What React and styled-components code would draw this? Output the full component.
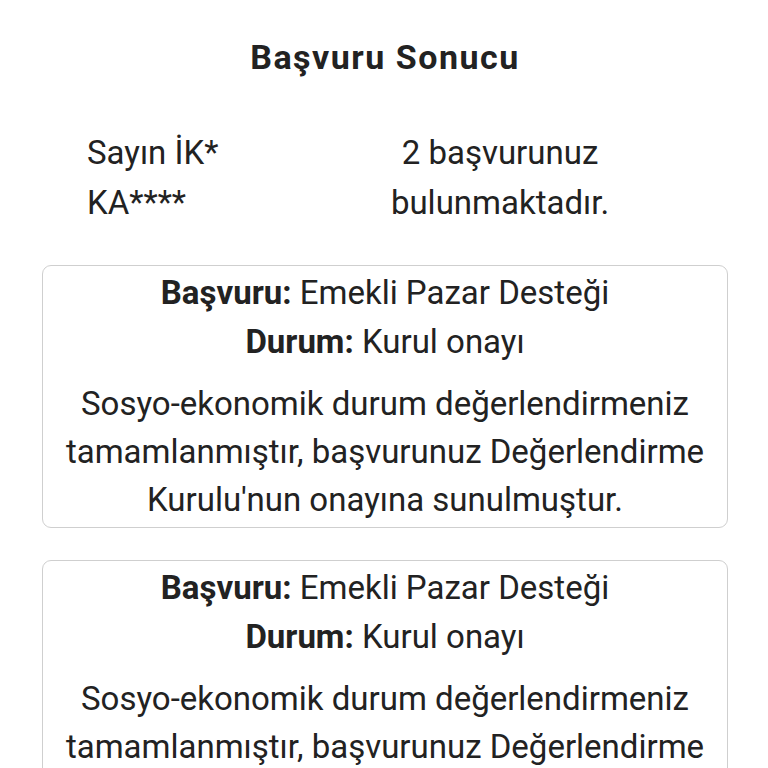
import React from "react";
import styled, { createGlobalStyle } from "styled-components";

const Global = createGlobalStyle`
  html, body { margin: 0; padding: 0; background: #ffffff; }
  body { font-family: Roboto, "Noto Sans", "Liberation Sans", sans-serif; color: #222222; }
`;

const Page = styled.div`
  padding: 0 40px 0 42px;
  display: flex;
  flex-direction: column;
`;

const Title = styled.h1`
  margin: 0;
  padding-top: 36px;
  height: 48px;
  line-height: 42px;
  text-align: center;
  font-size: 34px;
  font-weight: 700;
  letter-spacing: 1.5px;
  color: #222;
`;

const Greeting = styled.div`
  display: grid;
  grid-template-columns: 220px 386px;
  margin: 44px 0 37px 45px;
  font-size: 33px;
  line-height: 50px;
`;

const Name = styled.div`
  text-align: left;
`;

const Count = styled.div`
  text-align: center;
`;

const Cards = styled.div`
  display: flex;
  flex-direction: column;
  gap: 32px;
`;

const Card = styled.div`
  border: 1.5px solid #cfcfcf;
  border-radius: 9px;
  padding: 2px 12px 3px;
  text-align: center;
  font-size: 33px;
`;

const Line = styled.div`
  line-height: 49px;
`;

const Label = styled.span`
  font-weight: 700;
`;

const Message = styled.p`
  margin: 14px 0 0;
  line-height: 48px;
`;

const items = [
  {
    app: "Emekli Pazar Desteği",
    status: "Kurul onayı",
    msg: "Sosyo-ekonomik durum değerlendirmeniz tamamlanmıştır, başvurunuz Değerlendirme Kurulu'nun onayına sunulmuştur.",
  },
  {
    app: "Emekli Pazar Desteği",
    status: "Kurul onayı",
    msg: "Sosyo-ekonomik durum değerlendirmeniz tamamlanmıştır, başvurunuz Değerlendirme Kurulu'nun onayına sunulmuştur.",
  },
];

export default function App() {
  return (
    <>
      <Global />
      <Page>
        <Title>Başvuru Sonucu</Title>
        <Greeting>
          <Name>Sayın İK* KA****</Name>
          <Count>2 başvurunuz bulunmaktadır.</Count>
        </Greeting>
        <Cards>
          {items.map((it, i) => (
            <Card key={i}>
              <Line>
                <Label>Başvuru:</Label> {it.app}
              </Line>
              <Line>
                <Label>Durum:</Label> {it.status}
              </Line>
              <Message>{it.msg}</Message>
            </Card>
          ))}
        </Cards>
      </Page>
    </>
  );
}
